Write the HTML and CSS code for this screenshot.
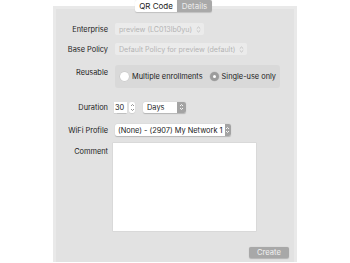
FILE: index.html
```html
<!DOCTYPE html>
<html lang="en">
<head>
    <meta charset="UTF-8">
    <meta name="viewport" content="width=device-width, initial-scale=1.0">
    <title>Enrollment Details</title>
    <link rel="stylesheet" href="styles.css">
</head>
<body>
    <div class="page">
        <div class="tabs">
            <span class="tab">QR Code</span>
            <span class="tab active">Details</span>
        </div>
        <div class="panel">
            <div class="row row-enterprise">
                <span class="label">Enterprise</span>
                <span class="popup disabled">preview (LC013lb0yu)
                    <svg class="chev" width="5" height="7" viewBox="0 0 5 7"><path d="M0.8 2.6 L2.5 1 L4.2 2.6 M0.8 4.4 L2.5 6 L4.2 4.4" fill="none" stroke="#b8b8b8" stroke-width="0.8"/></svg>
                </span>
            </div>
            <div class="row row-policy">
                <span class="label">Base Policy</span>
                <span class="popup disabled">Default Policy for preview (default)
                    <svg class="chev" width="5" height="7" viewBox="0 0 5 7"><path d="M0.8 2.6 L2.5 1 L4.2 2.6 M0.8 4.4 L2.5 6 L4.2 4.4" fill="none" stroke="#b8b8b8" stroke-width="0.8"/></svg>
                </span>
            </div>
            <div class="row row-reusable">
                <span class="label label-top">Reusable</span>
                <div class="radio-box">
                    <span class="radio"></span>
                    <span class="radio-text">Multiple enrollments</span>
                    <span class="radio checked"></span>
                    <span class="radio-text">Single-use only</span>
                </div>
            </div>
            <div class="row row-duration">
                <span class="label">Duration</span>
                <span class="num-field">30</span>
                <span class="stepper">
                    <svg width="5" height="9" viewBox="0 0 5 9"><path d="M1 3 L2.5 1.5 L4 3 M1 6 L2.5 7.5 L4 6" fill="none" stroke="#777" stroke-width="0.8"/></svg>
                </span>
                <span class="popup enabled days">Days
                    <span class="popup-btn"><svg width="5" height="8" viewBox="0 0 5 8"><path d="M1 3 L2.5 1.5 L4 3 M1 5 L2.5 6.5 L4 5" fill="none" stroke="#fff" stroke-width="0.9"/></svg></span>
                </span>
            </div>
            <div class="row row-wifi">
                <span class="label">WiFi Profile</span>
                <span class="popup enabled wifi">(None) - (2907) My Network 1
                    <span class="popup-btn"><svg width="5" height="8" viewBox="0 0 5 8"><path d="M1 3 L2.5 1.5 L4 3 M1 5 L2.5 6.5 L4 5" fill="none" stroke="#fff" stroke-width="0.9"/></svg></span>
                </span>
            </div>
            <div class="row row-comment">
                <span class="label label-top">Comment</span>
                <div class="comment"></div>
            </div>
            <div class="footer">
                <span class="create">Create</span>
            </div>
        </div>
    </div>
</body>
</html>
```

FILE: styles.css
```css
body {
    margin: 0;
    background: #fff;
    font-family: Inter, "Liberation Sans", sans-serif;
    font-size: 7.4px;
    color: #222;
}
.page {
    width: 244px;
    margin-left: 53px;
}
.tabs {
    display: flex;
    justify-content: center;
    height: 12px;
    position: relative;
    z-index: 1;
    margin-left: -3px;
}
.tab {
    display: flex;
    align-items: center;
    justify-content: center;
    height: 12px;
    width: 42px;
    background: #fff;
    font-size: 8px;
    color: #222;
    border-radius: 2px 0 0 2px;
    box-shadow: 0 0.5px 1px rgba(0, 0, 0, 0.15);
}
.tab.active {
    width: 35px;
    background: #a9a9a9;
    color: #ececec;
    border-radius: 0 2px 2px 0;
}
.panel {
    margin-top: -6px;
    height: 256px;
    box-sizing: border-box;
    background: #e2e2e2;
    border: 3px solid #e9e9e9;
    border-bottom: 0;
    padding-top: 14px;
}
.row {
    display: flex;
    align-items: center;
}
.label {
    width: 52px;
    text-align: right;
    margin-right: 7px;
    flex-shrink: 0;
}
.label-top {
    align-self: flex-start;
}
.popup {
    display: flex;
    align-items: center;
    height: 12px;
    box-sizing: border-box;
    padding-left: 4px;
    border-radius: 2px;
    white-space: nowrap;
    font-size: 7.1px;
}
.popup.disabled {
    background: #ebebeb;
    color: #b4b4b4;
    padding-right: 3px;
}
.chev {
    margin-left: 4px;
}
.popup.enabled {
    background: #fff;
    color: #222;
    justify-content: space-between;
    box-shadow: 0 0.5px 1px rgba(0, 0, 0, 0.2);
    font-size: 7.4px;
}
.popup-btn {
    display: flex;
    align-items: center;
    justify-content: center;
    width: 9px;
    height: 100%;
    background: #a3a3a3;
    border-radius: 0 2px 2px 0;
    margin-left: 2px;
}
.row-enterprise {
    height: 12px;
}
.row-policy {
    height: 12px;
    margin-top: 8px;
}
.row-reusable {
    margin-top: 10px;
}
.row-reusable .label-top {
    padding-top: 3px;
}
.radio-box {
    display: flex;
    align-items: center;
    width: 165px;
    height: 23px;
    box-sizing: border-box;
    padding-left: 5px;
    background: #d9d9d9;
    border-radius: 3px;
}
.radio {
    width: 9px;
    height: 9px;
    border-radius: 50%;
    background: #fff;
    box-shadow: 0 0 0 0.5px #c4c4c4;
    margin-right: 3px;
    box-sizing: border-box;
}
.radio.checked {
    border: 3px solid #9c9c9c;
    background-color: #fff;
    margin-left: 7px;
}
.radio-text {
    color: #222;
}
.row-duration {
    margin-top: 13px;
    height: 12px;
}
.num-field {
    width: 13px;
    height: 11px;
    background: #fff;
    display: flex;
    align-items: center;
    padding-left: 1px;
    box-sizing: border-box;
    margin-left: -1px;
    box-shadow: 0 0.5px 1px rgba(0, 0, 0, 0.15);
}
.stepper {
    display: flex;
    align-items: center;
    justify-content: center;
    width: 6px;
    height: 11px;
    margin-left: 2px;
    background: #fff;
    border-radius: 2px;
    box-shadow: 0 0.5px 1px rgba(0, 0, 0, 0.15);
}
.days {
    width: 43px;
    height: 11px;
    margin-left: 8px;
}
.row-wifi {
    margin-top: 11px;
    height: 12px;
}
.wifi {
    width: 116px;
    padding-left: 3px;
}
.row-comment {
    margin-top: 7px;
}
.row-comment .label-top {
    padding-top: 4px;
}
.comment {
    width: 143px;
    height: 88px;
    margin-left: -2px;
    background: #fff;
    box-shadow: 0 0 0 0.5px #d0d0d0;
}
.footer {
    display: flex;
    justify-content: flex-end;
    padding-right: 5px;
    margin-top: 16px;
}
.create {
    display: flex;
    align-items: center;
    justify-content: center;
    width: 40px;
    height: 11px;
    background: #a8a8a8;
    color: #f2f2f2;
    border-radius: 2px;
    font-size: 7.6px;
    box-shadow: 0 0.5px 1px rgba(0, 0, 0, 0.2);
}
```
